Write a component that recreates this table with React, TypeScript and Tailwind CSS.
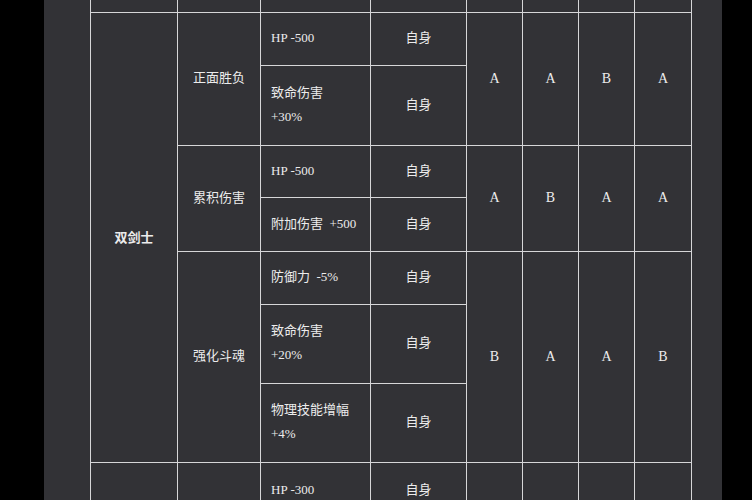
import React from "react";

type Block = {
  name: string;
  grades: string[];
  rows: { effect: React.ReactNode; target: string; h: number }[];
};

const blocks: Block[] = [
  {
    name: "正面胜负",
    grades: ["A", "A", "B", "A"],
    rows: [
      { effect: "HP -500", target: "自身", h: 53 },
      { effect: <>致命伤害<br />+30%</>, target: "自身", h: 80 },
    ],
  },
  {
    name: "累积伤害",
    grades: ["A", "B", "A", "A"],
    rows: [
      { effect: "HP -500", target: "自身", h: 52 },
      { effect: <>附加伤害&nbsp;&nbsp;+500</>, target: "自身", h: 54 },
    ],
  },
  {
    name: "强化斗魂",
    grades: ["B", "A", "A", "B"],
    rows: [
      { effect: <>防御力&nbsp;&nbsp;-5%</>, target: "自身", h: 53 },
      { effect: <>致命伤害<br />+20%</>, target: "自身", h: 79 },
      { effect: <>物理技能增幅<br />+4%</>, target: "自身", h: 79 },
    ],
  },
];

const td = "border border-[#d6d6d8] p-0 align-middle";

export default function App() {
  const total = blocks.reduce((n, b) => n + b.rows.length, 0);
  return (
    <div
      className="h-[500px] w-[752px] overflow-hidden bg-black flex text-[13px] text-[#ececec]"
      style={{ fontFamily: '"Liberation Serif", "Noto Sans CJK SC", serif' }}
    >
      <div className="w-[44px] shrink-0 bg-black" />
      <div className="w-[678px] shrink-0 bg-[#323236] pl-[46px]">
        <table className="table-fixed border-collapse mt-[-28px] w-[601px]">
          <colgroup>
            <col className="w-[87px]" />
            <col className="w-[83px]" />
            <col className="w-[110px]" />
            <col className="w-[96px]" />
            <col className="w-[56px]" />
            <col className="w-[56px]" />
            <col className="w-[56px]" />
            <col className="w-[57px]" />
          </colgroup>
          <tbody>
            <tr className="h-[40px]">
              {Array.from({ length: 8 }).map((_, i) => (
                <td key={i} className={td} />
              ))}
            </tr>
            {blocks.map((b, bi) =>
              b.rows.map((r, ri) => (
                <tr key={`${bi}-${ri}`} style={{ height: r.h }}>
                  {bi === 0 && ri === 0 && (
                    <td rowSpan={total} className={`${td} text-center font-bold`}>
                      双剑士
                    </td>
                  )}
                  {ri === 0 && (
                    <td rowSpan={b.rows.length} className={`${td} text-center pb-[2px]`}>
                      {b.name}
                    </td>
                  )}
                  <td className={`${td} pl-[10px] pb-[2px] leading-[24px]`}>{r.effect}</td>
                  <td className={`${td} text-center pb-[2px]`}>{r.target}</td>
                  {ri === 0 &&
                    b.grades.map((g, gi) => (
                      <td key={gi} rowSpan={b.rows.length} className={`${td} text-center text-[14px] pb-[2px]`}>
                        {g}
                      </td>
                    ))}
                </tr>
              ))
            )}
            <tr className="h-[54px]">
              <td className={td} />
              <td className={td} />
              <td className={`${td} pl-[10px]`}>HP -300</td>
              <td className={`${td} text-center`}>自身</td>
              <td className={td} />
              <td className={td} />
              <td className={td} />
              <td className={td} />
            </tr>
          </tbody>
        </table>
      </div>
      <div className="flex-1 bg-black" />
    </div>
  );
}
